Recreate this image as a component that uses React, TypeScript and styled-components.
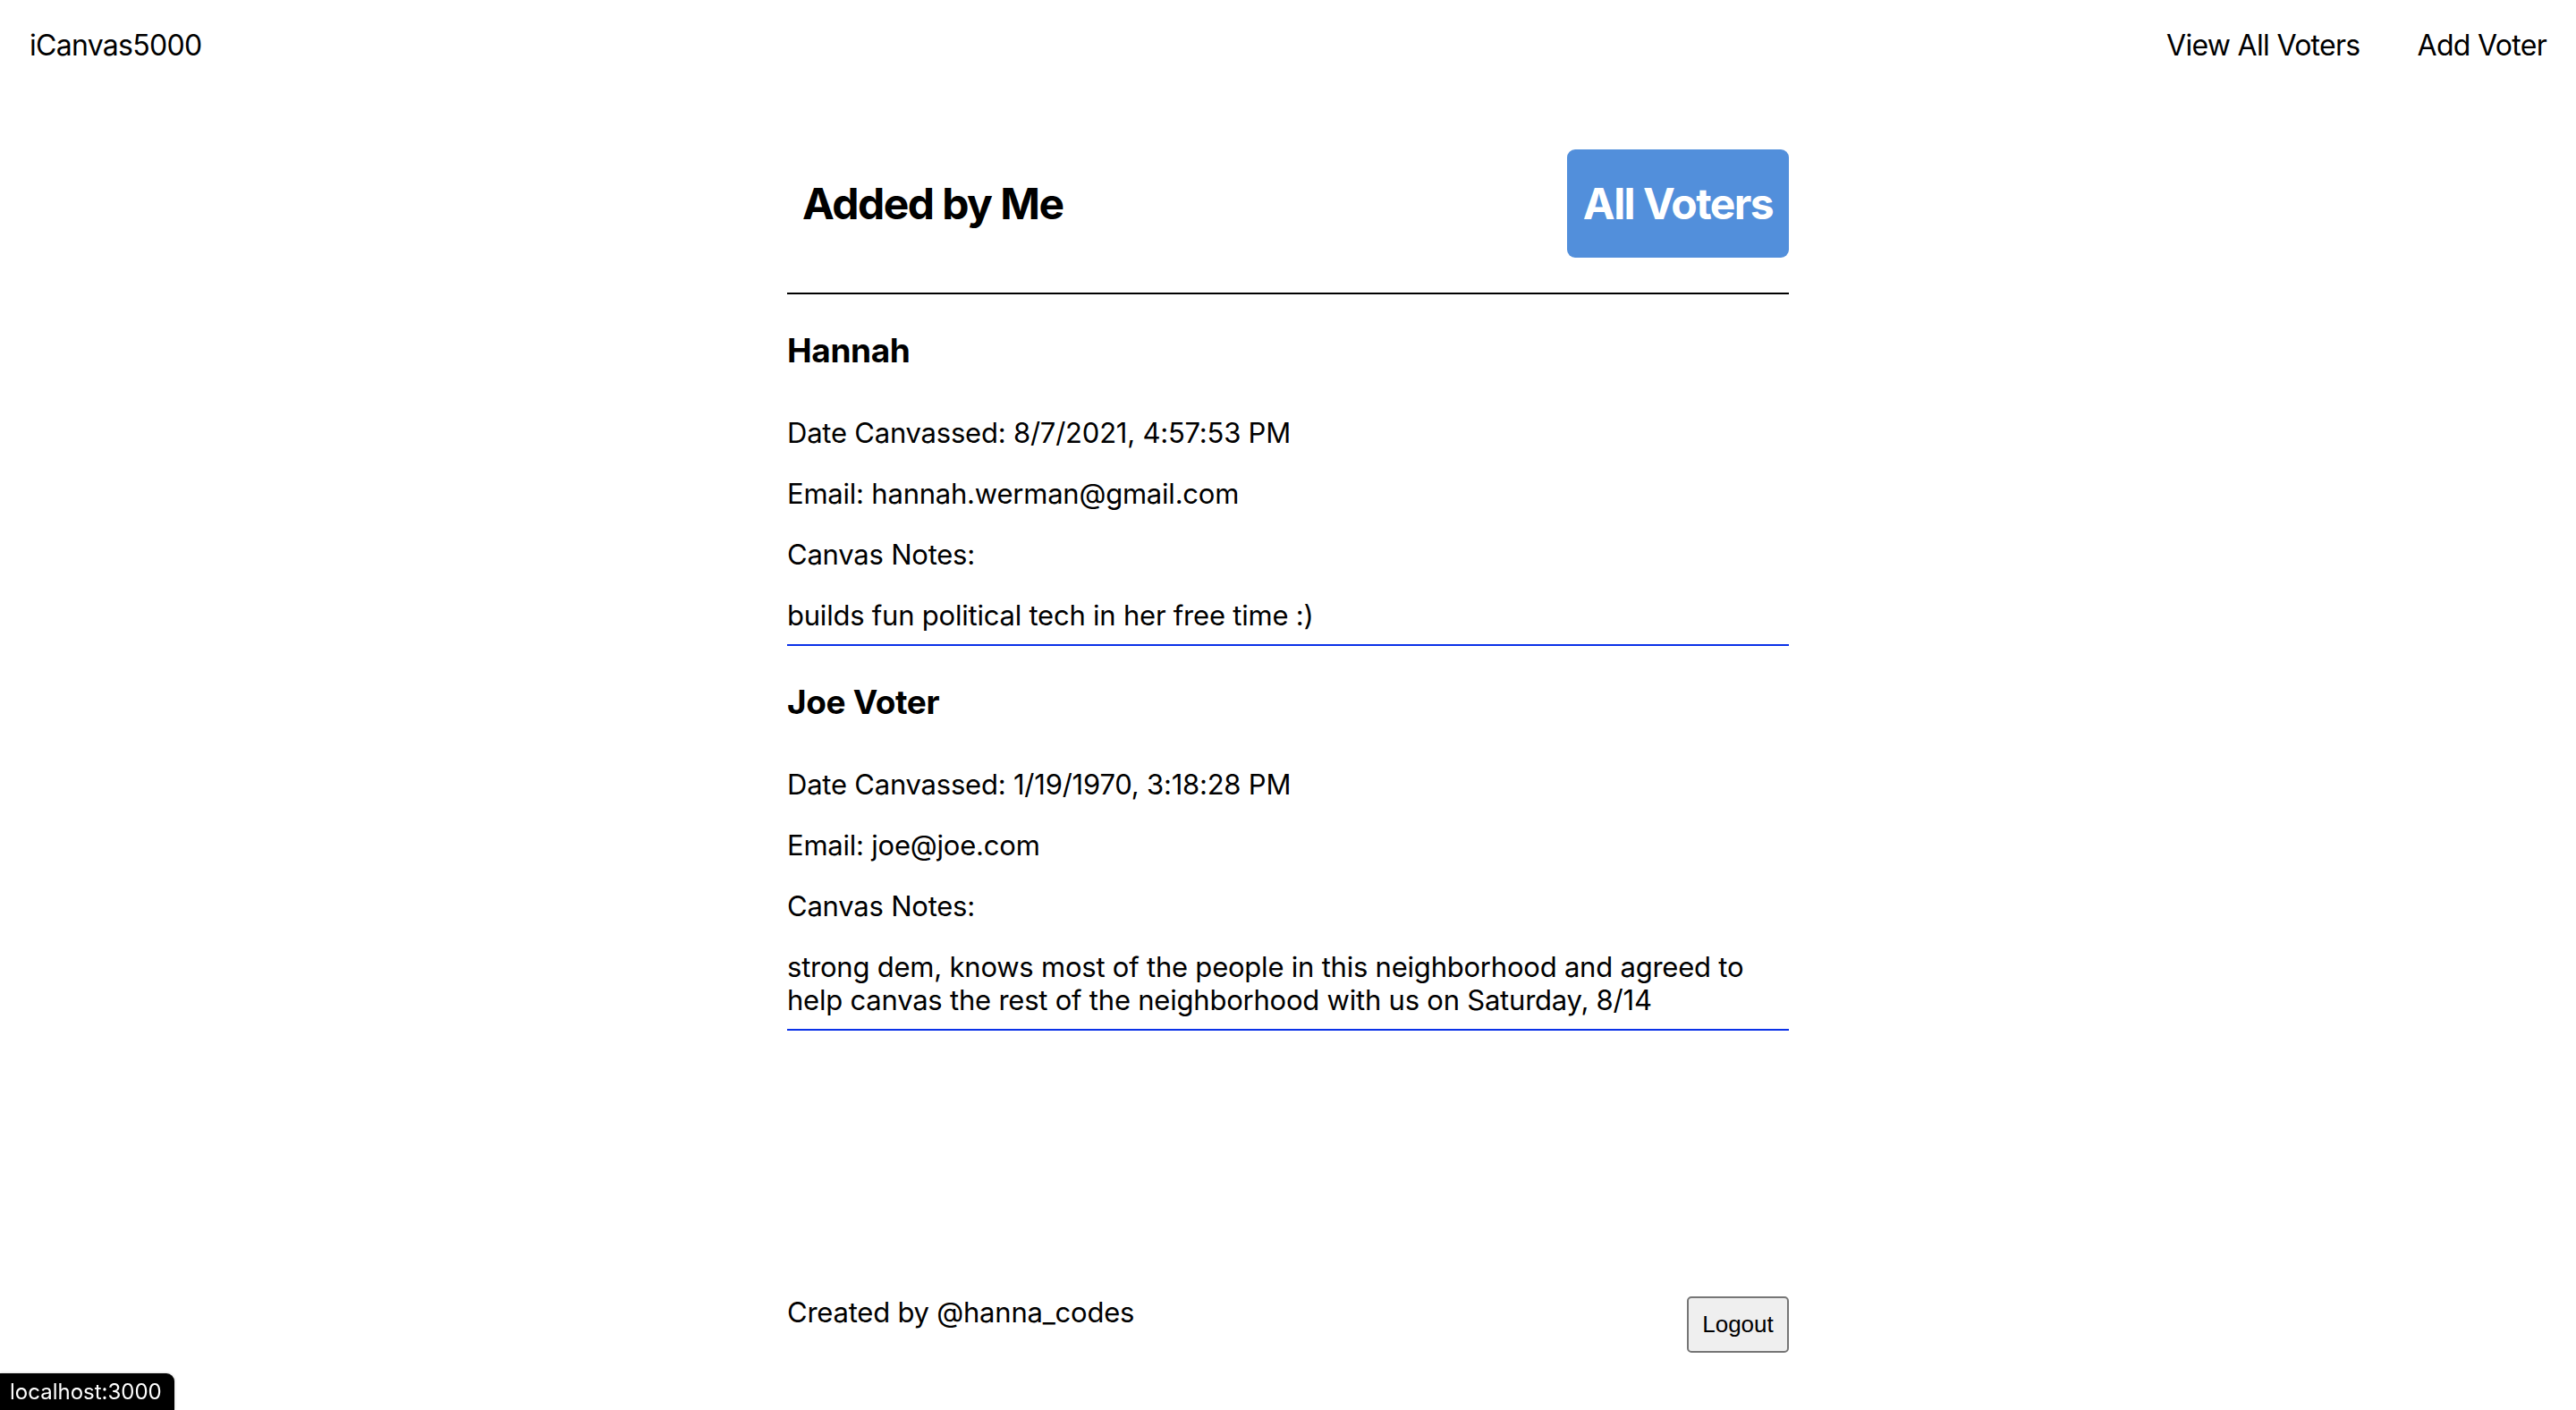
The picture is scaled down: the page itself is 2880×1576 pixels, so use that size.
import React from "react";
import styled, { createGlobalStyle } from "styled-components";

const GlobalStyle = createGlobalStyle`
  html, body {
    margin: 0;
    padding: 0;
    background: #ffffff;
    color: #000000;
    font-family: Inter, "Noto Sans", "Liberation Sans", sans-serif;
    letter-spacing: -0.22px;
  }
  * { box-sizing: border-box; }
`;

const Page = styled.div`
  min-height: 1576px;
  display: flex;
  flex-direction: column;
`;

const NavBar = styled.nav`
  display: flex;
  justify-content: space-between;
  align-items: flex-start;
  padding: 31px 33px 0 33px;
  font-size: 32px;
  line-height: 39px;
  letter-spacing: -0.022em;
`;

const Brand = styled.span`
  color: #000;
`;

const NavLinks = styled.div`
  display: flex;
  gap: 64px;
`;

const NavLink = styled.a`
  color: #000;
  text-decoration: none;
  cursor: pointer;
`;

const Main = styled.main`
  width: 1120px;
  margin: 97px auto 0;
  display: flex;
  flex-direction: column;
`;

const HeaderRow = styled.div`
  display: flex;
  justify-content: space-between;
  align-items: center;
  padding-bottom: 39px;
  border-bottom: 2px solid #000;
`;

const Title = styled.h2`
  margin: 0;
  padding-left: 17px;
  font-size: 48px;
  line-height: 58px;
  font-weight: 700;
  letter-spacing: -0.032em;
`;

const PrimaryButton = styled.button`
  width: 248px;
  height: 121px;
  padding: 0 10px;
  border: none;
  border-radius: 9px;
  background: #528fdb;
  color: #ffffff;
  font-family: Inter, "Noto Sans", sans-serif;
  font-size: 48px;
  font-weight: 700;
  letter-spacing: -0.032em;
  white-space: nowrap;
  cursor: pointer;
`;

const VoterCard = styled.section`
  display: flex;
  flex-direction: column;
  padding: 40px 0 14px;
  border-bottom: 2px solid #0a31e8;
`;

const VoterName = styled.h3`
  margin: 0 0 51px;
  font-size: 37px;
  line-height: 45px;
  font-weight: 700;
  letter-spacing: -0.01em;
`;

const Fields = styled.div`
  display: flex;
  flex-direction: column;
  gap: 31px;
`;

const Field = styled.p`
  margin: 0;
  font-size: 31px;
  line-height: 37px;
`;

const Footer = styled.footer`
  width: 1120px;
  margin: 296px auto 0;
  display: flex;
  justify-content: space-between;
  align-items: flex-start;
`;

const Credit = styled.span`
  font-size: 31px;
  line-height: 37px;
`;

const LogoutButton = styled.button`
  width: 114px;
  height: 63px;
  margin-top: 1px;
  padding: 0;
  border: 2px solid #767676;
  border-radius: 5px;
  background: #efefef;
  color: #000;
  font-family: "Liberation Sans", Arial, sans-serif;
  font-size: 26px;
  letter-spacing: 0;
  cursor: pointer;
`;

const StatusBubble = styled.div`
  position: fixed;
  left: 0;
  bottom: 0;
  height: 41px;
  padding: 0 14px 0 11px;
  display: flex;
  align-items: center;
  background: #000;
  color: #fff;
  font-family: Inter, "Noto Sans", sans-serif;
  font-size: 24px;
  letter-spacing: 0;
  border-top-right-radius: 9px;
  box-shadow: 0 0 3px rgba(0, 0, 0, 0.25);
`;

type Voter = {
  name: string;
  date: string;
  email: string;
  notes: string;
};

const voters: Voter[] = [
  {
    name: "Hannah",
    date: "8/7/2021, 4:57:53 PM",
    email: "hannah.werman@gmail.com",
    notes: "builds fun political tech in her free time :)",
  },
  {
    name: "Joe Voter",
    date: "1/19/1970, 3:18:28 PM",
    email: "joe@joe.com",
    notes:
      "strong dem, knows most of the people in this neighborhood and agreed to help canvas the rest of the neighborhood with us on Saturday, 8/14",
  },
];

export default function App() {
  return (
    <>
      <GlobalStyle />
      <Page>
        <NavBar>
          <Brand>iCanvas5000</Brand>
          <NavLinks>
            <NavLink>View All Voters</NavLink>
            <NavLink>Add Voter</NavLink>
          </NavLinks>
        </NavBar>
        <Main>
          <HeaderRow>
            <Title>Added by Me</Title>
            <PrimaryButton>All Voters</PrimaryButton>
          </HeaderRow>
          {voters.map((v) => (
            <VoterCard key={v.name}>
              <VoterName>{v.name}</VoterName>
              <Fields>
                <Field>Date Canvassed: {v.date}</Field>
                <Field>Email: {v.email}</Field>
                <Field>Canvas Notes:</Field>
                <Field>{v.notes}</Field>
              </Fields>
            </VoterCard>
          ))}
        </Main>
        <Footer>
          <Credit>Created by @hanna_codes</Credit>
          <LogoutButton>Logout</LogoutButton>
        </Footer>
      </Page>
      <StatusBubble>localhost:3000</StatusBubble>
    </>
  );
}
